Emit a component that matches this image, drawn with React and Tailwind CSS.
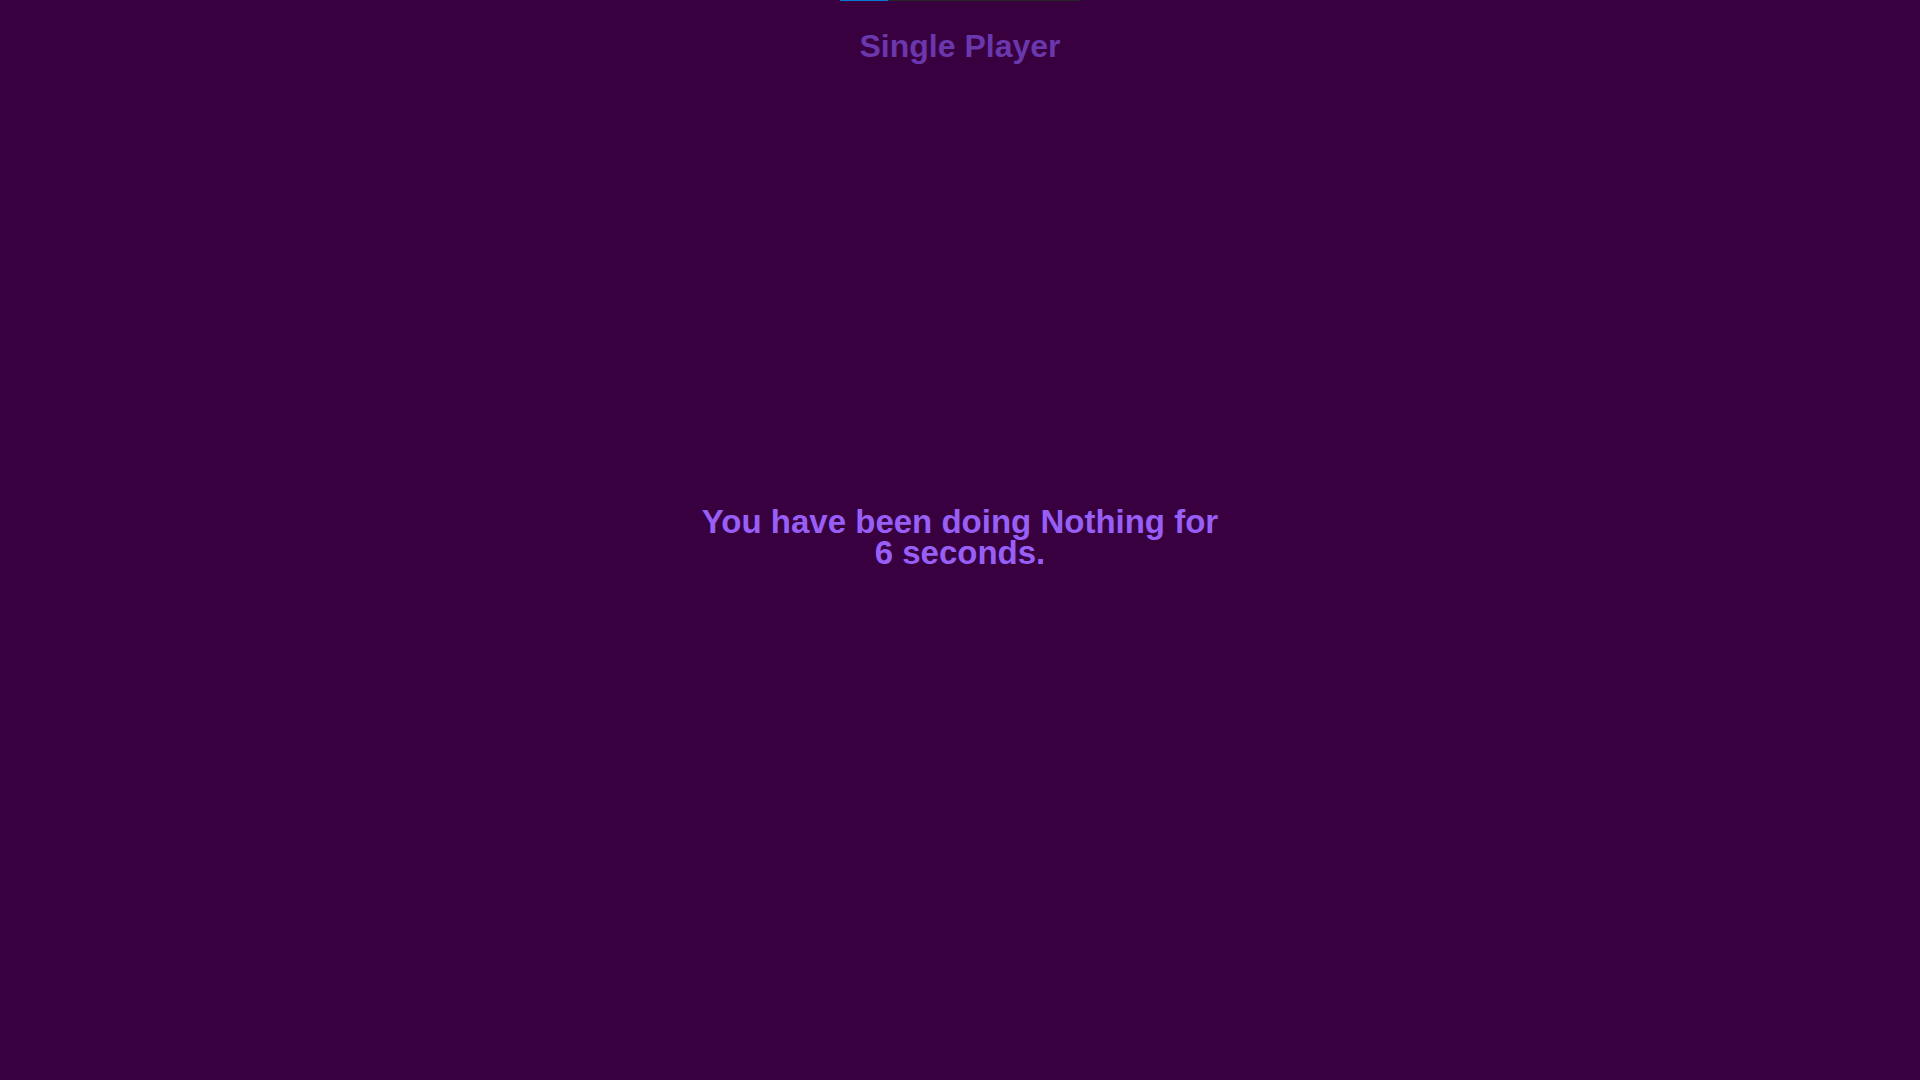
export default function App(){
    const progress=20

    return(
        <div className="h-screen w-full bg-[#39003f] flex flex-col font-['Liberation_Sans',Arial,sans-serif]">
            <div className="h-[72px] flex flex-col items-center shrink-0">
                <div className="w-[240px] h-px bg-[#262626]">
                    <div className="h-full bg-[#0a78d6]" style={{width:`${progress}%`}}></div>
                </div>
                <h1 className="mt-[27px] text-[32px] leading-[36px] font-bold text-[#6a37ad]">Single Player</h1>
            </div>
            <div className="flex-1 flex items-center justify-center">
                <p className="max-w-[532px] text-center text-[33px] leading-[31px] font-bold text-[#975ff5]">
                    You have been doing Nothing for 6 seconds.
                </p>
            </div>
            <div className="h-[78px] shrink-0"></div>
        </div>
    )
}
